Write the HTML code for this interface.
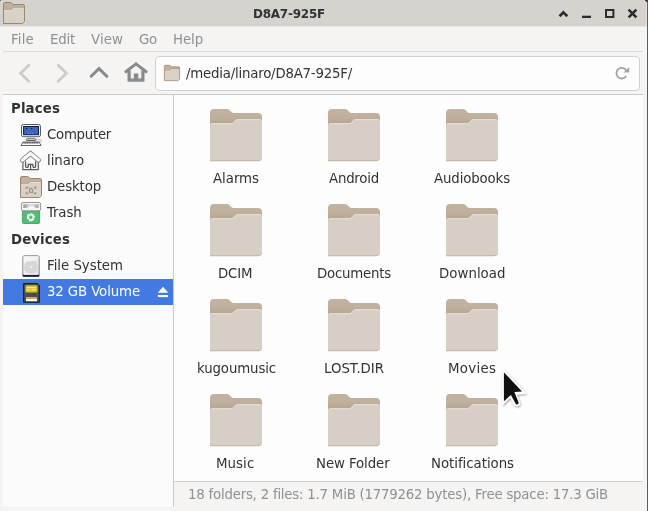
<!DOCTYPE html>
<html>
<head>
<meta charset="utf-8">
<title>D8A7-925F</title>
<style>
*{box-sizing:border-box;margin:0;padding:0}
html,body{width:648px;height:511px;overflow:hidden;background:#f5f4f3}
body{font-family:"DejaVu Sans","Liberation Sans",sans-serif;font-size:13.33px;color:#2e3436;position:relative}
.abs{position:absolute}
.t{position:absolute;white-space:pre;line-height:16px;height:16px;will-change:transform}
#titlebar{left:0;top:0;width:648px;height:26px;background:#d6d3cf}
#titlebar2{left:0;top:26px;width:648px;height:1px;background:#e5e3e0}
#rightedge{left:647px;top:0;width:1px;height:511px;background:#5d5d5d}
#rightlight{left:646px;top:0;width:1px;height:27px;background:#e2e0dd}
#menubar{left:3px;top:27px;width:640px;height:24px;background:#f5f4f3}
#menusep{left:3px;top:51px;width:640px;height:1px;background:#dcd9d6}
#toolbar{left:3px;top:52px;width:640px;height:42px;background:#f5f4f3}
#toolsep{left:3px;top:94px;width:640px;height:1px;background:#cdc7c2}
#entry{left:155px;top:56px;width:485px;height:35px;background:#fdfdfd;border:1px solid #d5d0cc;border-radius:4px}
#sidebar{left:3px;top:95px;width:170px;height:412px;background:#fbfbfb}
#sidesep{left:173px;top:95px;width:1px;height:412px;background:#cdc7c2}
#main{left:174px;top:95px;width:469px;height:386px;background:#fdfdfd}
#statussep{left:174px;top:481px;width:469px;height:1px;background:#d5d0cc}
#status{left:174px;top:482px;width:469px;height:25px;background:#f5f4f3}
#sel{left:3px;top:279px;width:170px;height:26px;background:#437ae2}
svg{position:absolute;overflow:visible}
</style>
</head>
<body>
<div id="titlebar" class="abs"></div>
<div id="titlebar2" class="abs"></div>
<div id="menubar" class="abs"></div>
<div id="menusep" class="abs"></div>
<div id="toolbar" class="abs"></div>
<div id="toolsep" class="abs"></div>
<div id="entry" class="abs"></div>
<div id="sidebar" class="abs"></div>
<div id="sidesep" class="abs"></div>
<div id="main" class="abs"></div>
<div id="statussep" class="abs"></div>
<div id="status" class="abs"></div>
<div id="sel" class="abs"></div>
<div id="rightlight" class="abs"></div>
<div id="rightedge" class="abs"></div>
<div class="abs" style="left:0;top:0;width:1px;height:1px;background:#6b6a68"></div>
<div class="abs" style="left:645px;top:0;width:3px;height:1px;background:#3a3a3a"></div>
<div class="abs" style="left:646px;top:1px;width:2px;height:1px;background:#3a3a3a"></div>

<svg width="0" height="0" style="left:0;top:0">
<defs>
<linearGradient id="bfg" x1="0" y1="0" x2="0" y2="1"><stop offset="0" stop-color="#c2b3a0"/><stop offset="0.25" stop-color="#c0b09d"/><stop offset="0.5" stop-color="#b6a691"/></linearGradient>
<g id="bigfolder">
<path d="M0,4 Q0,0 4,0 L17,0 Q18.400,0 19.400,1 L21.600,3.200 Q22.400,4 23.600,4 L48,4 Q52,4 52,8 L52,30 L0,30 Z" fill="url(#bfg)"/>
<path d="M0,30 L52,30 L52,48.200 A4,4 0 0 1 48,52.200 L0,52.200 Z" fill="#c1b3a2"/>
<path d="M0,16.200 Q0,14.200 2,14.200 L21,14.200 Q22.200,14.200 23,13.400 L25.200,11.200 Q26,10.200 27.200,10.200 L50,10.200 Q52,10.200 52,12.200 L52,47.400 A3.800,3.800 0 0 1 48.200,51.200 L0,51.200 Z" fill="#d7cfc5"/>
<path d="M0.700,15.300 Q1,14.700 2,14.700 L21,14.700 Q22.400,14.700 23.300,13.800 L25.500,11.600 Q26.200,10.700 27.200,10.700 L50,10.700 Q51,10.700 51.400,11.400" fill="none" stroke="#e6e0d9" stroke-width="1"/>
</g>
<g id="smallfolder">
<path d="M0.500,1.900 Q0.500,0.500 1.900,0.500 L7.400,0.500 Q8.200,0.500 8.800,1.100 L10.200,2.500 L20.100,2.500 Q21.500,2.500 21.500,3.900 L21.500,12 L0.500,12 Z" fill="#c0b09d"/>
<path d="M0.500,7.600 L8.200,7.600 L10.400,5.600 L21.500,5.600 L21.500,19.500 L19.500,21.500 L0.500,21.500 Z" fill="#d9d0c6"/>
<path d="M1,7.400 L8.100,7.400 L10.300,5.400 L21,5.400" fill="none" stroke="#ad9c86" stroke-width="0.900"/>
<path d="M1.400,8.300 L8.500,8.300 L10.700,6.300 L20.600,6.300" fill="none" stroke="#e6e0d8" stroke-width="0.800"/>
<path d="M0.500,1.900 Q0.500,0.500 1.900,0.500 L7.400,0.500 Q8.200,0.500 8.800,1.100 L10.200,2.500 L20.100,2.500 Q21.500,2.500 21.500,3.900 L21.500,19.500 L19.500,21.500 L0.500,21.500 Z" fill="none" stroke="#998772" stroke-width="1" stroke-linejoin="round"/>
</g>
</defs>
</svg>

<!-- title bar icon -->
<svg width="22" height="22" style="left:3px;top:2px"><use href="#smallfolder"/></svg>
<!-- window buttons -->
<svg width="100" height="27" style="left:548px;top:0">
<path d="M15.400,10.500 L20.200,15.300 L18.300,17.200 L15.400,14.300 L12.500,17.200 L10.600,15.300 Z" fill="#2a2c2e"/>
<rect x="34" y="15.700" width="9" height="2.300" fill="#2a2c2e"/>
<rect x="58" y="10" width="7.4" height="7" fill="none" stroke="#2a2c2e" stroke-width="2"/>
<path d="M80.6,9.6 L88.4,17.4 M88.4,9.6 L80.6,17.4" fill="none" stroke="#2a2c2e" stroke-width="2.6" stroke-linecap="butt"/>
</svg>
<!-- toolbar icons -->
<svg width="150" height="42" style="left:3px;top:52px">
<path d="M25.8,13.200 L17.6,21.200 L25.8,29.200" fill="none" stroke="#cfcbc7" stroke-width="2.8" stroke-linecap="round" stroke-linejoin="miter"/>
<path d="M55.2,13.200 L63.4,21.200 L55.2,29.200" fill="none" stroke="#cfcbc7" stroke-width="2.8" stroke-linecap="round" stroke-linejoin="miter"/>
<path d="M88.200,24.300 L96,16.600 L103.800,24.300" fill="none" stroke="#888b8d" stroke-width="3" stroke-linecap="round" stroke-linejoin="miter"/>
<path d="M122.800,19.700 L133,11.900 L143.200,19.700" fill="none" stroke="#888b8d" stroke-width="3" stroke-linecap="round" stroke-linejoin="miter"/>
<path d="M126.100,18.500 L126.100,28.200 L139.900,28.200 L139.900,18.500" fill="none" stroke="#888b8d" stroke-width="3.2"/>
<rect x="130.800" y="21.500" width="4.500" height="6" fill="#888b8d"/>
</svg>
<!-- entry folder icon -->
<svg width="16" height="16" style="left:164px;top:65px" viewBox="0 0 22 22"><use href="#smallfolder"/></svg>
<!-- reload -->
<svg width="20" height="20" style="left:612px;top:63px">
<path d="M14.6,8.2 A5.3,5.3 0 1 0 14.2,13" fill="none" stroke="#a3a3a3" stroke-width="1.8"/>
<path d="M17.2,4 L17.2,9.6 L11.6,9.6 Z" fill="#a3a3a3"/>
</svg>
<svg width="52" height="52" style="left:210px;top:109px"><use href="#bigfolder"/></svg>
<svg width="52" height="52" style="left:328px;top:109px"><use href="#bigfolder"/></svg>
<svg width="52" height="52" style="left:446px;top:109px"><use href="#bigfolder"/></svg>
<svg width="52" height="52" style="left:210px;top:204px"><use href="#bigfolder"/></svg>
<svg width="52" height="52" style="left:328px;top:204px"><use href="#bigfolder"/></svg>
<svg width="52" height="52" style="left:446px;top:204px"><use href="#bigfolder"/></svg>
<svg width="52" height="52" style="left:210px;top:299px"><use href="#bigfolder"/></svg>
<svg width="52" height="52" style="left:328px;top:299px"><use href="#bigfolder"/></svg>
<svg width="52" height="52" style="left:446px;top:299px"><use href="#bigfolder"/></svg>
<svg width="52" height="52" style="left:210px;top:394px"><use href="#bigfolder"/></svg>
<svg width="52" height="52" style="left:328px;top:394px"><use href="#bigfolder"/></svg>
<svg width="52" height="52" style="left:446px;top:394px"><use href="#bigfolder"/></svg>
<!-- computer -->
<svg width="22" height="22" style="left:20px;top:124px">
<ellipse cx="17.6" cy="16.7" rx="4.2" ry="1.5" fill="#ececec" stroke="#b0b0b0" stroke-width="0.8"/>
<rect x="1.5" y="0.5" width="19" height="12.2" rx="1.8" fill="#f6f6f6" stroke="#5c5c5c"/>
<rect x="3.6" y="2.5" width="14.9" height="8.2" fill="#4165b3" stroke="#0b1b5e"/>
<rect x="6" y="4" width="1.2" height="1.2" fill="#0b1b5e"/><rect x="11" y="4" width="1.2" height="1.2" fill="#0b1b5e"/>
<rect x="7.8" y="8.8" width="1.2" height="1.1" fill="#4f94ff"/><rect x="9.9" y="8.800" width="1.200" height="1.100" fill="#4f94ff"/><rect x="12" y="8.8" width="1.2" height="1.1" fill="#4f94ff"/>
<path d="M8.600,13.200 L13.400,13.200 L14.200,15 L7.800,15 Z" fill="#fafafa" stroke="#a5a5a5" stroke-width="0.7"/>
<rect x="6.200" y="14.900" width="9.600" height="1.600" rx="0.600" fill="#fdfdfd" stroke="#505050" stroke-width="0.900"/>
<path d="M2.800,18.100 L19.200,18.100 L21,21.500 L1,21.500 Z" fill="#fbfbfb" stroke="#555" stroke-width="0.900" stroke-linejoin="round"/>
<path d="M3.400,18.900 L18.600,18.900" stroke="#444" stroke-width="1.100" stroke-dasharray="1.300 0.400"/>
</svg>
<!-- home -->
<svg width="22" height="22" style="left:20px;top:150px">
<path d="M2.900,9.500 L2.900,19.700 L18.300,19.700 L18.300,9.500" fill="#fdfdfd" stroke="#5e5e5e" stroke-width="1.200" stroke-linejoin="round"/>
<path d="M5.600,11.500 L5.600,16.600 Q5.600,17.300 6.300,17.300 L7.600,17.300 Q8.300,17.300 8.300,16.600 L8.300,14.300 L12.900,14.300 L12.900,16.600 Q12.900,17.300 13.600,17.300 L14.900,17.300 Q15.600,17.300 15.600,16.600 L15.600,11.500" fill="none" stroke="#555" stroke-width="1.300"/>
<path d="M10.600,14.600 L10.600,19.600" stroke="#555" stroke-width="1.200"/>
<path d="M2.500,10.100 L10.500,3.500 L18.500,10.100" fill="none" stroke="#858585" stroke-width="5" stroke-linecap="round" stroke-linejoin="miter"/>
<path d="M2.500,10.100 L10.500,3.500 L18.500,10.100" fill="none" stroke="#fdfdfd" stroke-width="3.200" stroke-linecap="round" stroke-linejoin="miter"/>
</svg>
<!-- desktop -->
<svg width="22" height="22" style="left:20px;top:176px"><use href="#smallfolder"/>
<g fill="none" stroke="#a3917a" stroke-width="1.300">
<path d="M6.400,13 L6.400,11.300 L8.200,11.300 M13.800,11.300 L15.600,11.300 L15.600,13 M15.600,16 L15.600,17.700 L13.800,17.700 M8.200,17.700 L6.400,17.700 L6.400,16"/>
<path d="M9.500,12.500 L11.500,12.500 L12.700,13.800 L12.700,16.400 L9.500,16.400 Z" stroke-width="1.200"/>
</g>
</svg>
<!-- trash -->
<svg width="22" height="22" style="left:20px;top:202px">
<defs><linearGradient id="tg" x1="0" x2="1"><stop offset="0" stop-color="#9a9a9a"/><stop offset="0.5" stop-color="#dcdcdc"/><stop offset="1" stop-color="#a8a8a8"/></linearGradient></defs>
<rect x="2.4" y="8.4" width="17.2" height="13.1" rx="1.2" fill="#53bb74" stroke="#41a462" stroke-width="0.9"/>
<rect x="1.4" y="0.5" width="19.2" height="8.3" rx="1.6" fill="#f6f6f6" stroke="#8a8a8a" stroke-width="0.9"/>
<rect x="3.3" y="2.2" width="15.4" height="3.8" fill="url(#tg)"/>
<path d="M7,6 L9.4,3 L11,4.6 L13,3.4 L15.5,6 Z" fill="#f2f2f2"/>
<g>
<path d="M10.31,12.54 A2.8,2.8 0 0 1 13.43,14.34" fill="none" stroke="#fff" stroke-width="2.2"/>
<path d="M14.08,16.13 L15.31,13.66 L11.55,15.03 Z" fill="#fff"/>
<path d="M13.43,16.26 A2.8,2.8 0 0 1 10.31,18.06" fill="none" stroke="#fff" stroke-width="2.2"/>
<path d="M8.44,17.73 L9.97,20.03 L10.66,16.09 Z" fill="#fff"/>
<path d="M8.66,17.10 A2.8,2.8 0 0 1 8.66,13.50" fill="none" stroke="#fff" stroke-width="2.2"/>
<path d="M9.88,12.04 L7.12,12.21 L10.19,14.79 Z" fill="#fff"/>
</g>
</svg>
<!-- hdd -->
<svg width="22" height="22" style="left:20px;top:255px">
<defs><linearGradient id="hg" x1="0" y1="0" x2="1" y2="1"><stop offset="0" stop-color="#fafafa"/><stop offset="1" stop-color="#dedede"/></linearGradient></defs>
<rect x="2.8" y="0.7" width="16.4" height="20.6" rx="1.6" fill="url(#hg)" stroke="#8c8c8c" stroke-width="1"/>
<circle cx="11" cy="12" r="7" fill="#d9d7d5"/>
<path d="M4,5 Q11,9 18.4,3 L18.400,1.5 L3.6,1.500 Z" fill="#f6f6f6" opacity="0.8"/>
<circle cx="11" cy="12" r="0.9" fill="#fafafa"/>
<path d="M2.6,19.700 L19.4,19.700 L19.4,20.400 Q19.4,21.700 18,21.700 L4,21.700 Q2.6,21.700 2.6,20.400 Z" fill="#1c1c1c"/>
<path d="M4,19.300 L18,19.300" stroke="#fff" stroke-width="0.8"/>
</svg>
<!-- sd card -->
<svg width="22" height="22" style="left:20px;top:283px">
<path d="M3.6,0.5 L17.6,0.5 L19.4,2.3 L19.4,19.300 L3.6,19.300 Z" fill="#4d4d4d" stroke="#1d1d1d" stroke-width="1"/>
<rect x="5.6" y="2.6" width="11.6" height="6.600" rx="0.6" fill="#d8ca3c" stroke="#b5a520" stroke-width="0.8"/>
<path d="M7,4.500 L16,4.500 M7,6.800 L10,6.800 M11.5,6.800 L16,6.800" stroke="#f3ea8a" stroke-width="1"/>
<rect x="13.4" y="10.8" width="1.4" height="1.2" fill="#2a2a2a"/>
<rect x="6" y="14" width="11" height="1.8" fill="#c9a75e"/>
<rect x="6" y="15.8" width="11" height="2.400" fill="#f8f8f8"/>
</svg>
<!-- eject -->
<svg width="12" height="12" style="left:157px;top:286px">
<path d="M6,0.7 L11.200,6.800 L0.800,6.800 Z" fill="#fff"/>
<rect x="0.9" y="9" width="10.2" height="2.1" fill="#fff"/>
</svg>

<div class="t" style="left:253.00px;top:6.00px;font-size:12px;font-weight:bold;color:#303335;letter-spacing:-0.243px">D8A7-925F</div>
<div class="t" style="left:11.00px;top:32.00px;font-size:13.33px;color:#8e9192;letter-spacing:0.172px">File</div>
<div class="t" style="left:50.00px;top:32.00px;font-size:13.33px;color:#8e9192;letter-spacing:-0.203px">Edit</div>
<div class="t" style="left:91.00px;top:32.00px;font-size:13.33px;color:#8e9192;letter-spacing:0.090px">View</div>
<div class="t" style="left:138.50px;top:32.00px;font-size:13.33px;color:#8e9192;letter-spacing:-0.242px">Go</div>
<div class="t" style="left:172.50px;top:32.00px;font-size:13.33px;color:#8e9192;letter-spacing:-0.098px">Help</div>
<div class="t" style="left:186.00px;top:66.00px;font-size:13.33px;color:#303335;letter-spacing:-0.212px">/media/linaro/D8A7-925F/</div>
<div class="t" style="left:187.50px;top:487.00px;font-size:13.33px;color:#8e9192;letter-spacing:-0.222px">18 folders, 2 files: 1.7 MiB (1779262 bytes), Free space: 17.3 GiB</div>
<div class="t" style="left:11.00px;top:101.00px;font-size:13.33px;font-weight:bold;color:#303335;letter-spacing:0.130px">Places</div>
<div class="t" style="left:47.00px;top:127.00px;font-size:13.33px;color:#303335;letter-spacing:-0.283px">Computer</div>
<div class="t" style="left:47.00px;top:153.00px;font-size:13.33px;color:#303335;letter-spacing:-0.062px">linaro</div>
<div class="t" style="left:47.00px;top:179.00px;font-size:13.33px;color:#303335;letter-spacing:-0.138px">Desktop</div>
<div class="t" style="left:47.00px;top:205.00px;font-size:13.33px;color:#303335;letter-spacing:-0.147px">Trash</div>
<div class="t" style="left:11.00px;top:232.00px;font-size:13.33px;font-weight:bold;color:#303335;letter-spacing:0.109px">Devices</div>
<div class="t" style="left:47.00px;top:258.00px;font-size:13.33px;color:#303335;letter-spacing:-0.023px">File System</div>
<div class="t" style="left:47.00px;top:284.00px;font-size:13.33px;color:#ffffff;letter-spacing:-0.125px">32 GB Volume</div>
<div class="t" style="left:213.00px;top:171.00px;font-size:13.33px;color:#303335;letter-spacing:-0.029px">Alarms</div>
<div class="t" style="left:329.00px;top:171.00px;font-size:13.33px;color:#303335;letter-spacing:-0.219px">Android</div>
<div class="t" style="left:434.00px;top:171.00px;font-size:13.33px;color:#303335;letter-spacing:-0.133px">Audiobooks</div>
<div class="t" style="left:218.25px;top:266.00px;font-size:13.33px;color:#303335;letter-spacing:-0.175px">DCIM</div>
<div class="t" style="left:317.00px;top:266.00px;font-size:13.33px;color:#303335;letter-spacing:-0.222px">Documents</div>
<div class="t" style="left:438.55px;top:266.00px;font-size:13.33px;color:#303335;letter-spacing:0.029px">Download</div>
<div class="t" style="left:196.50px;top:361.00px;font-size:13.33px;color:#303335;letter-spacing:-0.123px">kugoumusic</div>
<div class="t" style="left:324.01px;top:361.00px;font-size:13.33px;color:#303335;letter-spacing:-0.021px">LOST.DIR</div>
<div class="t" style="left:447.50px;top:361.00px;font-size:13.33px;color:#303335;letter-spacing:0.302px">Movies</div>
<div class="t" style="left:216.35px;top:456.00px;font-size:13.33px;color:#303335;letter-spacing:0.076px">Music</div>
<div class="t" style="left:316.40px;top:456.00px;font-size:13.33px;color:#303335;letter-spacing:-0.090px">New Folder</div>
<div class="t" style="left:430.50px;top:456.00px;font-size:13.33px;color:#303335;letter-spacing:-0.032px">Notifications</div>
<svg width="40" height="50" style="left:494px;top:362px">
<defs><filter id="cs" x="-30%" y="-30%" width="160%" height="160%"><feGaussianBlur stdDeviation="0.9"/></filter></defs>
<path d="M8.200,6.200 L8.200,43.400 L16.400,35.400 L20.600,43.300 Q22.800,45.200 25.400,43.200 L26.200,41.500 L22.600,32.600 L32.300,31.500 Z" fill="#000" opacity="0.45" filter="url(#cs)" transform="translate(0.600,1)"/>
<path d="M8.200,6.200 L8.200,43.400 L16.400,35.400 L20.600,43.300 Q22.800,45.200 25.400,43.200 L26.200,41.500 L22.600,32.600 L32.300,31.500 Z" fill="#ffffff" stroke="#ffffff" stroke-width="0.8" stroke-linejoin="round"/>
<path d="M9.900,10.300 L9.900,39.300 L16.900,32.900 L21.800,41.900 Q23,43 24.300,42 L24.700,40.700 L20.400,30 L28,29.500 Z" fill="#101010"/>
</svg>

</body>
</html>
